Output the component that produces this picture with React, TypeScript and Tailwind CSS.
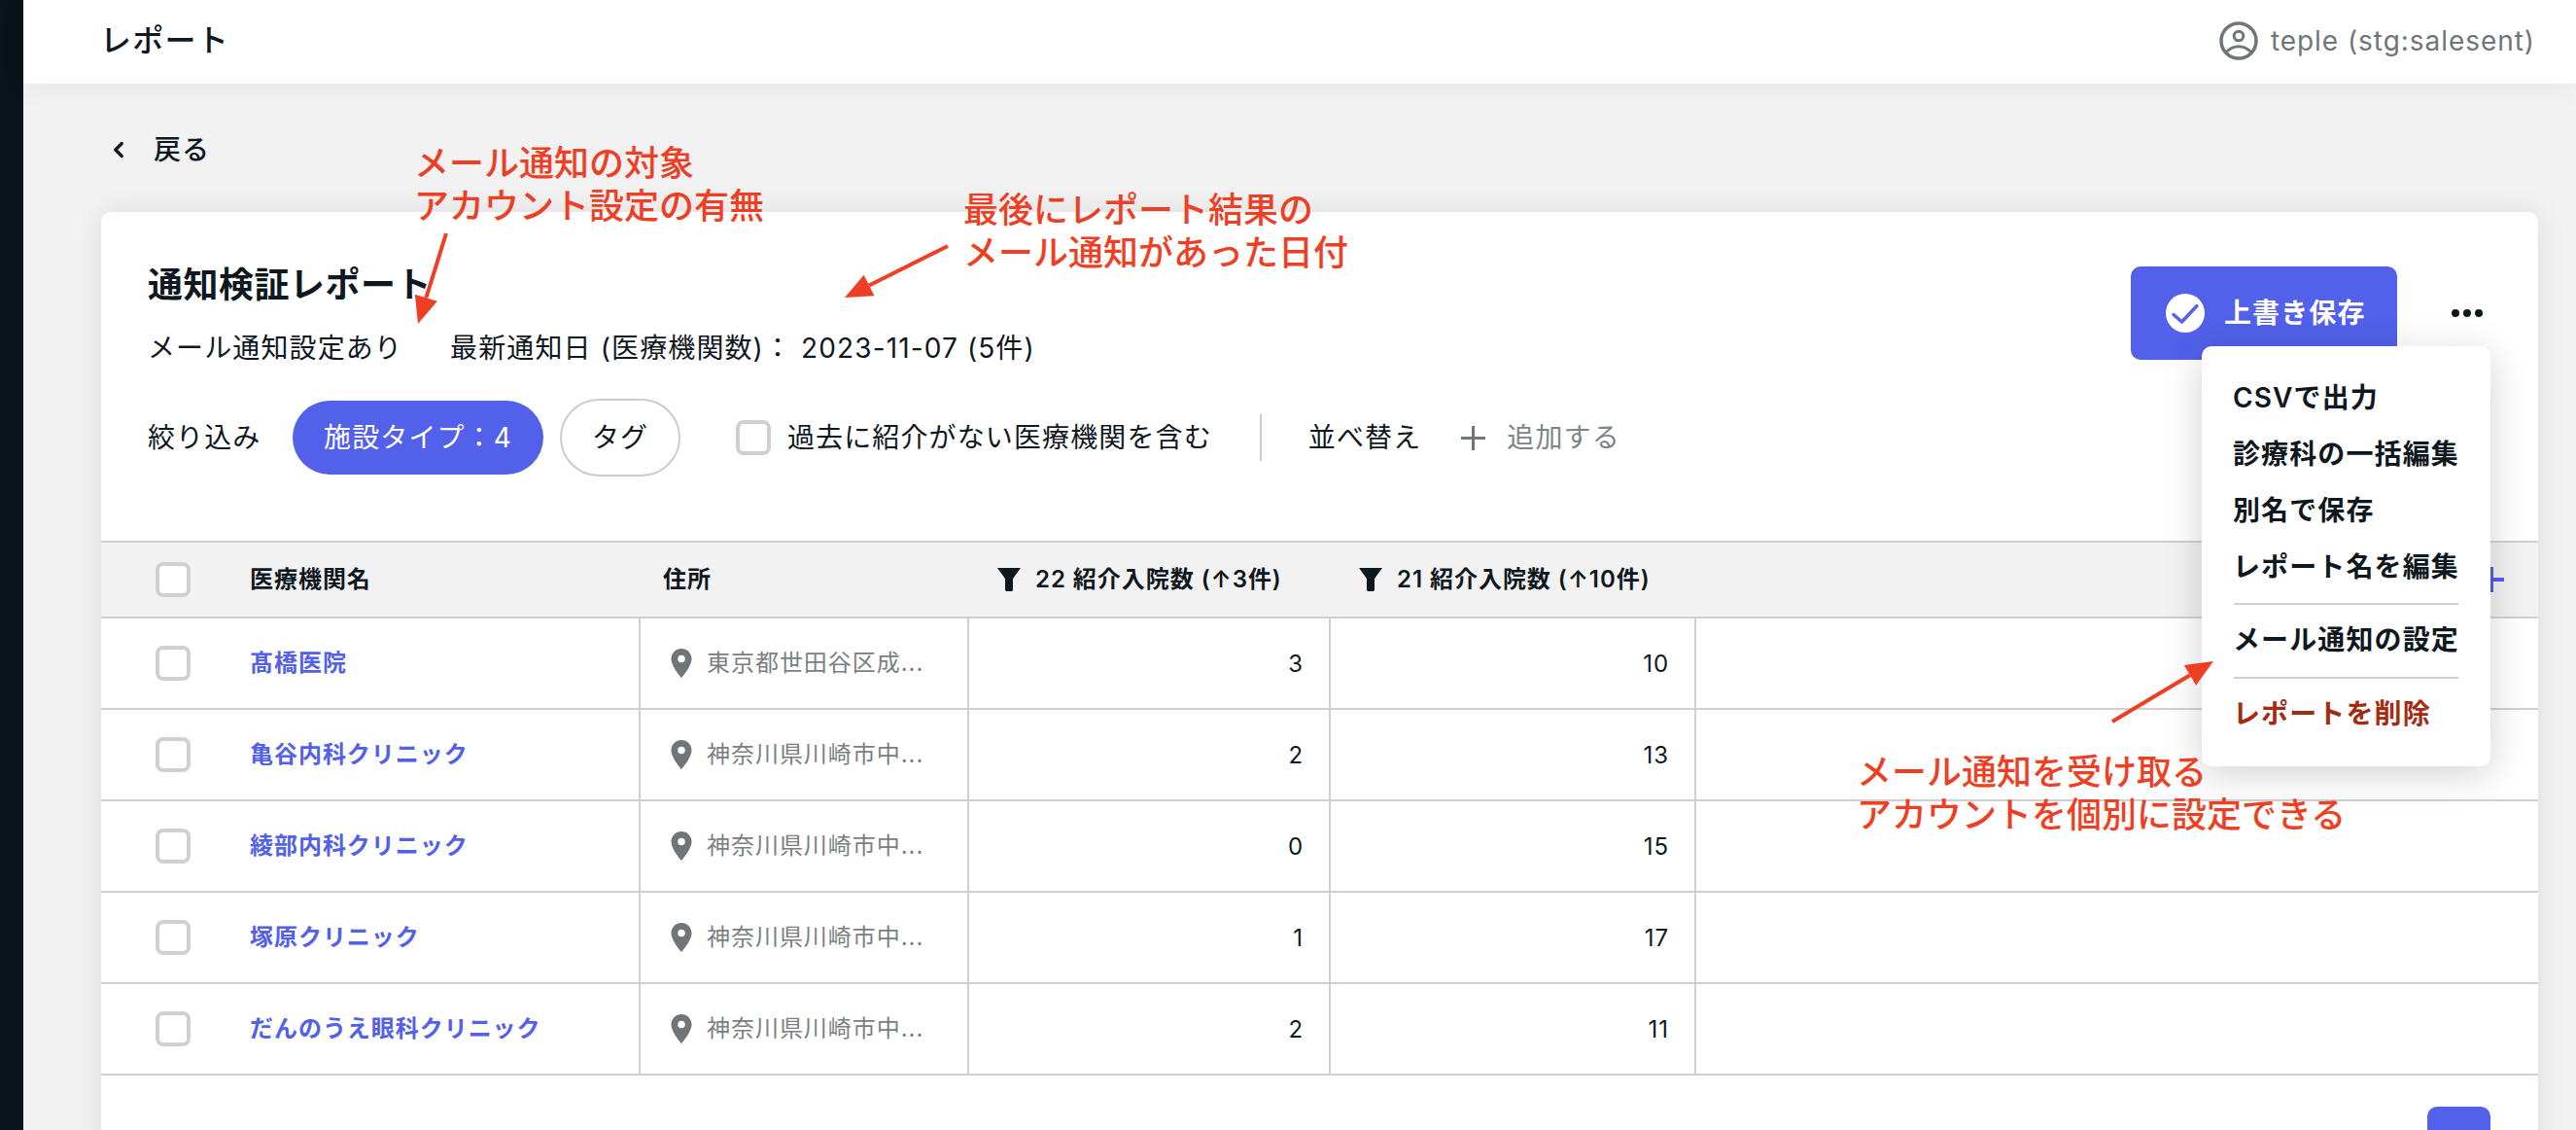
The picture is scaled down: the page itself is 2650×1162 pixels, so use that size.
import { ChevronLeft } from 'lucide-react';
import { MdLocationOn } from 'react-icons/md';

const rows = [
  { name: '髙橋医院', address: '東京都世田谷区成...', a: 3, b: 10 },
  { name: '亀谷内科クリニック', address: '神奈川県川崎市中...', a: 2, b: 13 },
  { name: '綾部内科クリニック', address: '神奈川県川崎市中...', a: 0, b: 15 },
  { name: '塚原クリニック', address: '神奈川県川崎市中...', a: 1, b: 17 },
  { name: 'だんのうえ眼科クリニック', address: '神奈川県川崎市中...', a: 2, b: 11 },
];

function Checkbox({ bg = 'bg-white' }: { bg?: string }) {
  return <div className={`w-[36px] h-[36px] shrink-0 rounded-[8px] border-[4px] border-[#d0d0d0] ${bg}`} />;
}

function Funnel() {
  return (
    <svg viewBox="0 0 24 24" className="w-[24px] h-[24px] shrink-0">
      <path d="M0 0h24L16 11v11.5a1.5 1.5 0 0 1-1.5 1.5h-5A1.5 1.5 0 0 1 8 22.5V11z" fill="#10181f" />
    </svg>
  );
}

function Cross({ className, size, width }: { className: string; size: number; width: number }) {
  const m = size / 2;
  return (
    <svg viewBox={`0 0 ${size} ${size}`} style={{ width: size, height: size }} className={`shrink-0 ${className}`}>
      <path d={`M${m} 0V${size}M0 ${m}H${size}`} stroke="currentColor" strokeWidth={width} fill="none" />
    </svg>
  );
}

function Arrow({ x1, y1, x2, y2 }: { x1: number; y1: number; x2: number; y2: number }) {
  // 矢印は線と先端の三角形で描く
  const len = Math.hypot(x2 - x1, y2 - y1);
  const ux = (x2 - x1) / len;
  const uy = (y2 - y1) / len;
  const bx = x2 - ux * 28;
  const by = y2 - uy * 28;
  const head = `${x2},${y2} ${bx - uy * 12},${by + ux * 12} ${bx + uy * 12},${by - ux * 12}`;
  return (
    <>
      <line x1={x1} y1={y1} x2={bx} y2={by} stroke="#ee3f24" strokeWidth="4" />
      <polygon points={head} fill="#ee3f24" />
    </>
  );
}

function Note({ className, lines }: { className: string; lines: string[] }) {
  return (
    <div className={`absolute text-[36px] leading-[44px] font-medium text-[#ee3f24] whitespace-nowrap ${className}`}>
      {lines.map((l) => (
        <div key={l}>{l}</div>
      ))}
    </div>
  );
}

export default function App() {
  return (
    <div className="relative flex w-[2650px] h-[1162px] overflow-hidden bg-[#f2f2f2] text-[#10181f] font-['Inter','Noto_Sans_CJK_JP',sans-serif]">
      <aside className="w-[24px] shrink-0 bg-[#0a141b]" />

      <main className="flex-1 flex flex-col min-w-0">
        <header className="relative z-10 h-[86px] shrink-0 flex items-center justify-between bg-white pl-[79px] pr-[42px] pb-[2px] shadow-[0_4px_30px_rgba(0,0,0,0.05)]">
          <h1 className="text-[32px] font-medium tracking-[1.28px]">レポート</h1>
          <div className="flex items-center gap-[13px] text-[#6f7579]">
            <svg viewBox="0 0 40 40" className="w-[40px] h-[40px]" fill="none" stroke="currentColor">
              <circle cx="20" cy="20" r="18" strokeWidth="3.5" />
              <circle cx="20" cy="15" r="4.8" strokeWidth="3" />
              <path d="M7 31.5Q20 20 33 31.5" strokeWidth="3" />
            </svg>
            <span className="text-[28px] tracking-[0.95px]">teple (stg:salesent)</span>
          </div>
        </header>

        <div className="flex-1 flex flex-col pl-[80px] pr-[39px] min-h-0">
          <div className="h-[132px] shrink-0 flex items-center gap-[23px] pl-[5px] pt-[4px] text-[28px] font-medium tracking-[1.12px]">
            <ChevronLeft size={26} strokeWidth={3} />
            <span>戻る</span>
          </div>

          <section className="relative flex-1 flex flex-col bg-white rounded-t-[10px] shadow-[0_0_30px_rgba(0,0,0,0.09)]">
            <div className="h-[338px] shrink-0 flex justify-between pl-[48px] pr-[57px]">
              <div>
                <h2 className="mt-[55px] text-[36px] leading-[40px] font-bold tracking-[0.5px]">通知検証レポート</h2>
                <div className="mt-[27px] flex items-center gap-[49px] text-[28px] leading-[36px] tracking-[1.12px]">
                  <span>メール通知設定あり</span>
                  <span>最新通知日 (医療機関数)： 2023-11-07 (5件)</span>
                </div>
                <div className="mt-[34px] flex items-center text-[28px] tracking-[1.12px]">
                  <span className="w-[149px]">絞り込み</span>
                  <span className="w-[258px] h-[76px] flex items-center justify-center rounded-full bg-[#5260ea] text-white">
                    施設タイプ：4
                  </span>
                  <span className="ml-[17px] w-[124px] h-[80px] flex items-center justify-center rounded-full border-2 border-[#cccccc]">
                    タグ
                  </span>
                  <span className="ml-[57px]">
                    <Checkbox />
                  </span>
                  <span className="ml-[17px]">過去に紹介がない医療機関を含む</span>
                  <span className="ml-[49px] w-[2px] h-[48px] bg-[#cccccc]" />
                  <span className="ml-[48px]">並べ替え</span>
                  <Cross className="ml-[41px] text-[#6f7579]" size={25} width={3} />
                  <span className="ml-[22px] text-[#7d8488]">追加する</span>
                </div>
              </div>

              <div className="flex items-start gap-[56px] pt-[56px]">
                <button className="w-[274px] h-[96px] flex items-center gap-[20px] pl-[36px] rounded-[10px] bg-[#5260ea] text-white text-[28px] font-semibold tracking-[1.12px]">
                  <svg viewBox="0 0 40 40" className="w-[40px] h-[40px]">
                    <circle cx="20" cy="20" r="20" fill="#fff" />
                    <path d="M8 21.5l8.5 7.5L32 12.5" fill="none" stroke="#5260ea" strokeWidth="3.5" strokeLinecap="round" strokeLinejoin="round" />
                  </svg>
                  上書き保存
                </button>
                <div className="mt-[44px] flex gap-[4px]">
                  <span className="w-[8px] h-[8px] rounded-full bg-[#10181f]" />
                  <span className="w-[8px] h-[8px] rounded-full bg-[#10181f]" />
                  <span className="w-[8px] h-[8px] rounded-full bg-[#10181f]" />
                </div>
              </div>
            </div>

            <div className="h-[80px] shrink-0 flex items-center bg-[#f2f2f2] border-y-2 border-[#d0d0d0] text-[24px] font-semibold tracking-[0.96px]">
              <div className="w-[555px] flex items-center pl-[56px]">
                <Checkbox />
                <span className="ml-[61px]">医療機関名</span>
              </div>
              <div className="w-[338px] pl-[23px]">住所</div>
              <div className="w-[372px] flex items-center gap-[15px] pl-[29px]">
                <Funnel />
                <span>22 紹介入院数 (↑3件)</span>
              </div>
              <div className="w-[376px] flex items-center gap-[15px] pl-[29px]">
                <Funnel />
                <span>21 紹介入院数 (↑10件)</span>
              </div>
              <div className="flex-1 flex justify-end pr-[35px] text-[#5260ea]">
                <Cross className="" size={26} width={4} />
              </div>
            </div>

            {rows.map((row) => (
              <div key={row.name} className="h-[94px] shrink-0 flex border-b-2 border-[#d0d0d0] text-[24px] tracking-[0.96px]">
                <div className="w-[555px] flex items-center pl-[56px] border-r-2 border-[#d0d0d0]">
                  <Checkbox />
                  <span className="ml-[61px] font-semibold text-[#5260ea]">{row.name}</span>
                </div>
                <div className="w-[338px] flex items-center gap-[9px] pl-[31px] border-r-2 border-[#d0d0d0] text-[#7a7f83]">
                  <MdLocationOn size={36} className="text-[#6f7579] -mx-[7px]" />
                  <span className="ml-[6px]">{row.address}</span>
                </div>
                <div className="w-[372px] flex items-center justify-end pr-[26px] pt-[2px] border-r-2 border-[#d0d0d0]">{row.a}</div>
                <div className="w-[376px] flex items-center justify-end pr-[26px] pt-[2px] border-r-2 border-[#d0d0d0]">{row.b}</div>
                <div className="flex-1" />
              </div>
            ))}

            <div className="flex-1 flex justify-end items-start pr-[49px] pt-[32px]">
              <div className="w-[65px] h-[60px] rounded-[10px] bg-[#5260ea]" />
            </div>

            {/* 三点メニュー */}
            <div className="absolute left-[2161px] top-[138px] w-[297px] pt-[24px] pb-[25px] px-[33px] bg-white rounded-[10px] shadow-[0_8px_40px_rgba(0,0,0,0.18)] text-[28px] font-semibold tracking-[1.12px] whitespace-nowrap">
              <div className="-ml-[1px] h-[58px] flex items-center">CSVで出力</div>
              <div className="-ml-[1px] h-[58px] flex items-center">診療科の一括編集</div>
              <div className="-ml-[1px] h-[58px] flex items-center">別名で保存</div>
              <div className="-ml-[1px] h-[58px] flex items-center">レポート名を編集</div>
              <div className="mt-[8px] h-[2px] bg-[#d0d0d0]" />
              <div className="-ml-[1px] mt-[7px] h-[58px] flex items-center">メール通知の設定</div>
              <div className="mt-[9px] h-[2px] bg-[#d0d0d0]" />
              <div className="-ml-[1px] mt-[7px] h-[58px] flex items-center text-[#a52a12]">レポートを削除</div>
            </div>
          </section>
        </div>
      </main>

      {/* 赤い注釈 */}
      <svg className="absolute inset-0 w-[2650px] h-[1162px] pointer-events-none" viewBox="0 0 2650 1162">
        <Arrow x1={459} y1={240} x2={430} y2={333} />
        <Arrow x1={975} y1={253} x2={869} y2={306} />
        <Arrow x1={2173} y1={742} x2={2277} y2={680} />
      </svg>
      <Note className="left-[426px] top-[146px]" lines={['メール通知の対象', 'アカウント設定の有無']} />
      <Note className="left-[991px] top-[194px]" lines={['最後にレポート結果の', 'メール通知があった日付']} />
      <Note className="left-[1910px] top-[772px]" lines={['メール通知を受け取る', 'アカウントを個別に設定できる']} />
    </div>
  );
}
